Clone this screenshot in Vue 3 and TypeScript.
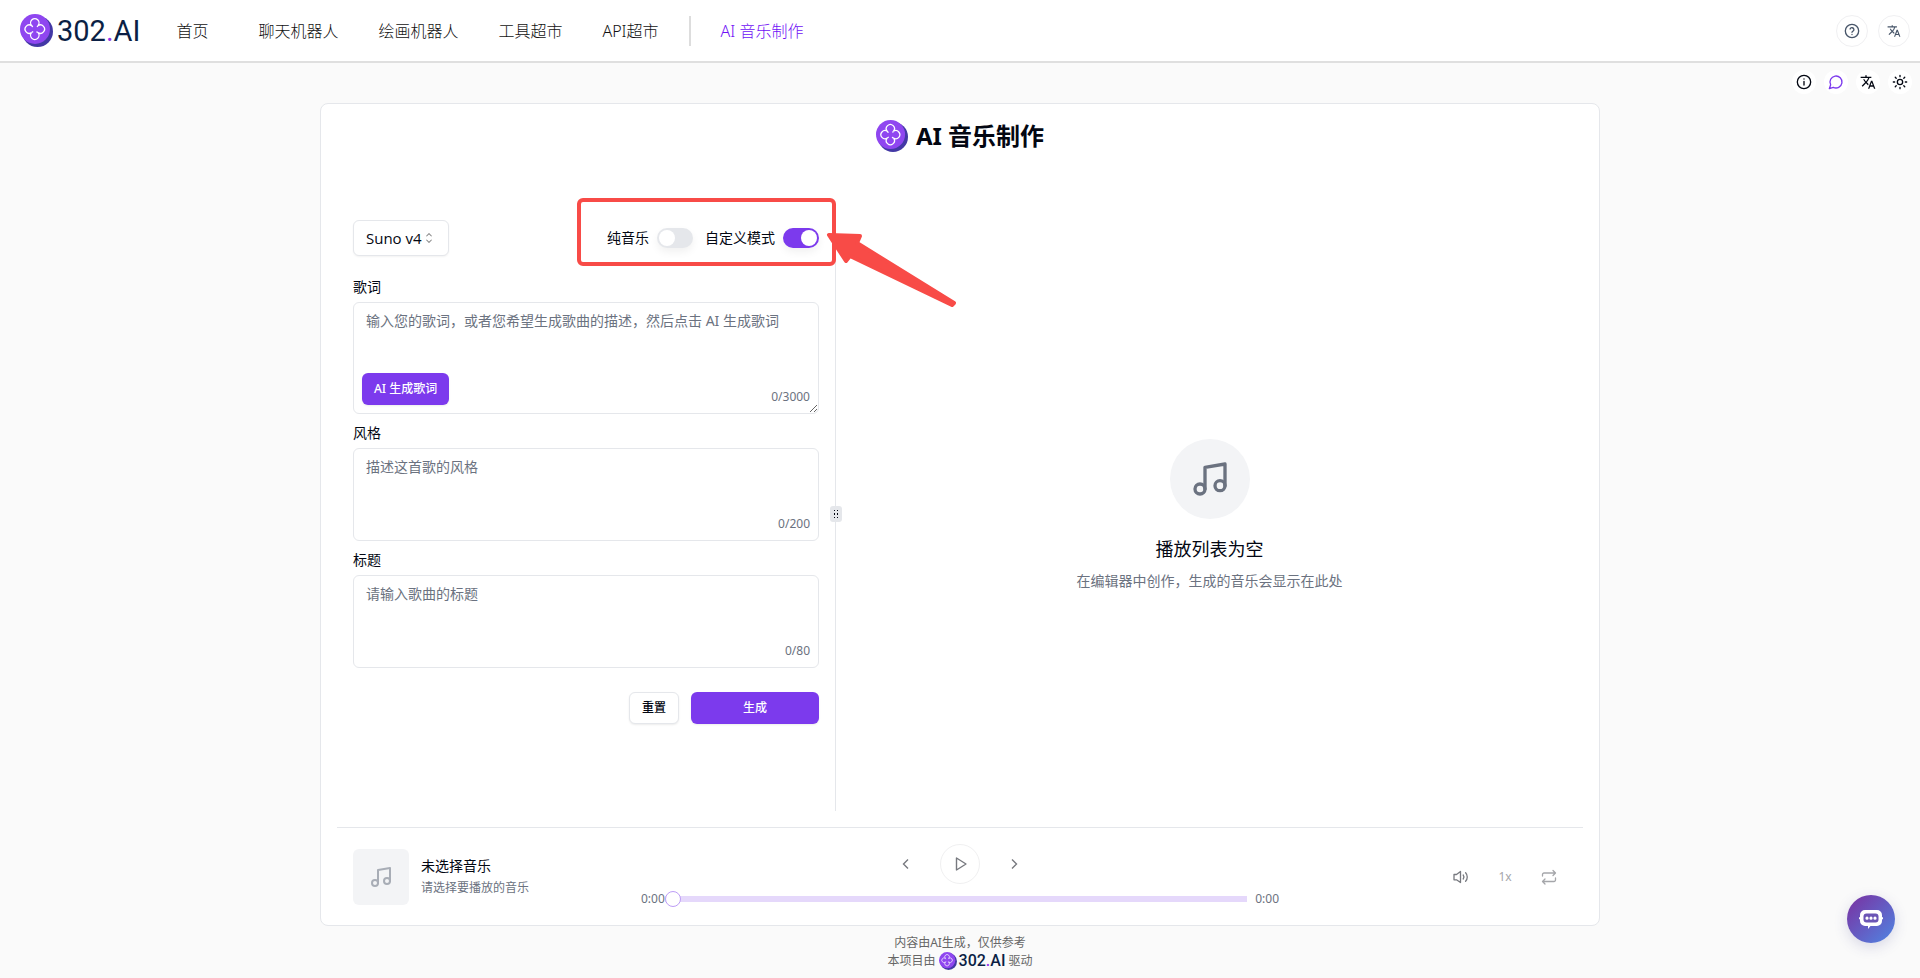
<script setup lang="ts">
import { ref } from 'vue'

interface NavItem {
  label: string
  href: string
}

const navItems: NavItem[] = [
  { label: '聊天机器人', href: '#chat' },
  { label: '绘画机器人', href: '#draw' },
  { label: '工具超市', href: '#tools' },
  { label: 'API超市', href: '#api' },
]

const model = ref('Suno v4')
const instrumental = ref(false)
const customMode = ref(true)
const lyrics = ref('')
const musicStyle = ref('')
const songTitle = ref('')
const progress = ref(0)

function reset(): void {
  lyrics.value = ''
  musicStyle.value = ''
  songTitle.value = ''
}
</script>

<template>
  <div class="page">
    <svg class="defs" aria-hidden="true">
      <symbol id="brand" viewBox="0 0 33 33">
        <circle cx="17.5" cy="17.5" r="15.5" fill="#4338a5" />
        <circle cx="15" cy="15" r="15" fill="#8f46f0" />
        <g fill="none" stroke="#fff" stroke-width="1.3">
          <path d="M11.6 11.6A4.2 4.2 0 1 1 18 11.6A4.2 4.2 0 1 1 18 18.6A4.2 4.2 0 1 1 11.6 18.6A4.2 4.2 0 1 1 11.6 11.6A3 3 0 0 1 12.6 13.2" />
          <path d="M18 11.6A3 3 0 0 0 17.2 13M18 18.6A3 3 0 0 0 16.4 17.8M11.6 18.6A3 3 0 0 1 13.2 17.6" />
        </g>
      </symbol>
      <symbol id="translate" viewBox="0 0 24 24">
        <path fill="currentColor" d="M12.87 15.07l-2.54-2.51.03-.03A17.52 17.52 0 0 0 14.07 6H17V4h-7V2H8v2H1v1.99h11.17C11.5 7.92 10.44 9.75 9 11.35 8.07 10.32 7.3 9.19 6.69 8h-2c.73 1.63 1.73 3.17 2.98 4.56l-5.09 5.02L4 19l5-5 3.11 3.11.76-2.04zM18.5 10h-2L12 22h2l1.12-3h4.75L21 22h2l-4.5-12zm-2.62 7l1.62-4.33L19.12 17h-3.24z" />
      </symbol>
      <symbol id="music" viewBox="0 0 24 24" fill="none" stroke="currentColor" stroke-width="2" stroke-linecap="round" stroke-linejoin="round">
        <path d="M9 18V5l12-2v13" />
        <circle cx="6" cy="18" r="3" />
        <circle cx="18" cy="16" r="3" />
      </symbol>
    </svg>

    <header class="topbar">
      <a class="brand" href="#home" aria-label="302.AI">
        <svg class="brand-icon"><use href="#brand" /></svg>
        <span class="brand-text">302<i>.</i>AI</span>
      </a>
      <nav class="nav">
        <a class="nav-home" href="#home">首页</a>
        <a v-for="item in navItems" :key="item.label" :href="item.href">{{ item.label }}</a>
        <a class="nav-current" href="#music">AI 音乐制作</a>
      </nav>
      <div class="top-actions">
        <button type="button" class="round-btn" aria-label="帮助">
          <svg class="icon-16" viewBox="0 0 24 24" fill="none" stroke="currentColor" stroke-width="2" stroke-linecap="round" stroke-linejoin="round">
            <circle cx="12" cy="12" r="10" />
            <path d="M9.1 9a3 3 0 0 1 5.8 1c0 2-2.9 2.6-2.9 4M12 17.2h.01" />
          </svg>
        </button>
        <button type="button" class="round-btn" aria-label="语言">
          <svg class="icon-14"><use href="#translate" /></svg>
        </button>
      </div>
    </header>

    <div class="toolbar">
      <button type="button" class="tool-btn" aria-label="关于">
        <svg class="icon-16" viewBox="0 0 24 24" fill="none" stroke="currentColor" stroke-width="2" stroke-linecap="round">
          <circle cx="12" cy="12" r="10" />
          <path d="M12 16.5V11M12 7.5h.01" />
        </svg>
      </button>
      <button type="button" class="tool-btn violet" aria-label="反馈">
        <svg class="icon-16" viewBox="0 0 24 24" fill="none" stroke="currentColor" stroke-width="2" stroke-linejoin="round">
          <path d="M7.9 20A9 9 0 1 0 4 16.1L2 22Z" />
        </svg>
      </button>
      <button type="button" class="tool-btn" aria-label="切换语言">
        <svg class="icon-16"><use href="#translate" /></svg>
      </button>
      <button type="button" class="tool-btn" aria-label="主题">
        <svg class="icon-16" viewBox="0 0 24 24" fill="none" stroke="currentColor" stroke-width="2" stroke-linecap="round">
          <circle cx="12" cy="12" r="4" />
          <path d="M12 2v2M12 20v2M4.9 4.9l1.4 1.4M17.7 17.7l1.4 1.4M2 12h2M20 12h2M6.3 17.7l-1.4 1.4M19.1 4.9l-1.4 1.4" />
        </svg>
      </button>
    </div>

    <main class="card">
      <h1 class="title">
        <svg class="title-icon"><use href="#brand" /></svg>
        AI 音乐制作
      </h1>

      <div class="panels">
        <form class="editor" @submit.prevent>
          <div class="options">
            <div class="model">
              <select v-model="model" aria-label="模型">
                <option>Suno v4</option>
                <option>Suno v3</option>
              </select>
              <svg class="model-caret" viewBox="0 0 16 16" fill="none" stroke="currentColor" stroke-width="1.2" stroke-linejoin="round">
                <path d="M5 6l3-3 3 3M5 10l3 3 3-3" />
              </svg>
            </div>
            <div class="switches">
              <label class="switch">纯音乐<input v-model="instrumental" type="checkbox" role="switch" /></label>
              <label class="switch">自定义模式<input v-model="customMode" type="checkbox" role="switch" /></label>
              <div class="callout" aria-hidden="true"></div>
              <svg class="arrow" viewBox="0 0 132 78" aria-hidden="true">
                <path d="M3 4L34 5L31 12L128 72L126 74L24 25L20 30Z" fill="#f84b47" stroke="#f84b47" stroke-width="4" stroke-linejoin="round" />
              </svg>
            </div>
          </div>

          <label class="field-label" for="lyrics">歌词</label>
          <div class="field">
            <textarea id="lyrics" v-model="lyrics" class="tall" maxlength="3000" placeholder="输入您的歌词，或者您希望生成歌曲的描述，然后点击 AI 生成歌词"></textarea>
            <button type="button" class="btn primary lyric-btn">AI 生成歌词</button>
            <span class="count">{{ lyrics.length }}/3000</span>
          </div>

          <label class="field-label" for="style">风格</label>
          <div class="field">
            <textarea id="style" v-model="musicStyle" maxlength="200" placeholder="描述这首歌的风格"></textarea>
            <span class="count">{{ musicStyle.length }}/200</span>
          </div>

          <label class="field-label" for="song-title">标题</label>
          <div class="field">
            <textarea id="song-title" v-model="songTitle" maxlength="80" placeholder="请输入歌曲的标题"></textarea>
            <span class="count">{{ songTitle.length }}/80</span>
          </div>

          <div class="form-actions">
            <button type="button" class="btn outline" @click="reset">重置</button>
            <button type="submit" class="btn primary wide">生成</button>
          </div>
        </form>

        <div class="splitter">
          <span class="grip">
            <svg viewBox="0 0 10 10" fill="currentColor">
              <path d="M3 1h1v1H3zM6 1h1v1H6zM3 4h1v2H3zM6 4h1v2H6zM3 8h1v1H3zM6 8h1v1H6z" />
            </svg>
          </span>
        </div>

        <section class="empty">
          <div class="empty-icon"><svg><use href="#music" /></svg></div>
          <h2>播放列表为空</h2>
          <p>在编辑器中创作，生成的音乐会显示在此处</p>
        </section>
      </div>

      <section class="player">
        <div class="track">
          <div class="cover"><svg><use href="#music" /></svg></div>
          <div>
            <div class="track-name">未选择音乐</div>
            <div class="track-hint">请选择要播放的音乐</div>
          </div>
        </div>
        <div class="transport">
          <div class="buttons">
            <button type="button" class="plain" aria-label="上一首">
              <svg class="icon-16" viewBox="0 0 16 16" fill="none" stroke="currentColor" stroke-width="1.4"><path d="M10 3.500L5.500 8l4.500 4.500" /></svg>
            </button>
            <button type="button" class="play" aria-label="播放">
              <svg class="icon-16" viewBox="0 0 16 16" fill="none" stroke="currentColor" stroke-width="1.4" stroke-linejoin="round"><path d="M4.500 2L14 8L4.500 14Z" /></svg>
            </button>
            <button type="button" class="plain" aria-label="下一首">
              <svg class="icon-16" viewBox="0 0 16 16" fill="none" stroke="currentColor" stroke-width="1.4"><path d="M6 3.500L10.500 8L6 12.500" /></svg>
            </button>
          </div>
          <div class="timeline">
            <span>0:00</span>
            <input v-model.number="progress" type="range" min="0" max="100" aria-label="播放进度" />
            <span class="total">0:00</span>
          </div>
        </div>
        <div class="extras">
          <button type="button" class="plain" aria-label="音量">
            <svg class="icon-16" viewBox="0 0 16 16" fill="none" stroke="currentColor" stroke-width="1.3" stroke-linejoin="round" stroke-linecap="round">
              <path d="M1 5.500h2.500L7.500 2.500v11L3.500 10.800H1zM12.600 3.800c2.200 2.300 2.200 6.100 0 8.400M10.200 6c.9 1.200.9 2.800 0 4" />
            </svg>
          </button>
          <button type="button" class="plain pale">1x</button>
          <button type="button" class="plain pale" aria-label="循环">
            <svg class="icon-16" viewBox="0 0 16 16" fill="none" stroke="currentColor" stroke-width="1.3" stroke-linejoin="round" stroke-linecap="round">
              <path d="M1.500 7V5.500A1.500 1.500 0 0 1 3 4h11M12 1.500L14.500 4L12 6.500M14.500 9v2a1.500 1.500 0 0 1-1.500 1.500H2M4 10l-2.500 2.500L4 15" />
            </svg>
          </button>
        </div>
      </section>
    </main>

    <footer class="footer">
      <div>内容由AI生成，仅供参考</div>
      <div class="powered">
        本项目由
        <a class="mini-brand" href="#home">
          <svg><use href="#brand" /></svg>
          <span>302<i>.</i>AI</span>
        </a>
        驱动
      </div>
    </footer>

    <button type="button" class="fab" aria-label="客服">
      <svg viewBox="0 0 24 24">
        <path d="M6 3h12a5 5 0 0 1 5 5v6a5 5 0 0 1-5 5h-6.500l-2.500 3v-3H6a5 5 0 0 1-5-5V8a5 5 0 0 1 5-5z" fill="#fff" />
        <rect x="4.500" y="6.500" width="15" height="9" rx="3" fill="#6b55b5" />
        <path d="M0 11.200h3M21 11.200h3" stroke="#fff" stroke-width="2" />
        <path d="M8 11.200h.01M12 11.200h.01M16 11.200h.01" stroke="#fff" stroke-width="3.200" stroke-linecap="round" />
      </svg>
    </button>
  </div>
</template>

<style>
body {
  background: #fafafa;
}
</style>

<style scoped>
* {
  box-sizing: border-box;
}
.page {
  min-height: 100vh;
  display: flex;
  flex-direction: column;
  background: #fafafa;
  color: #030712;
  font: 14px/20px 'Noto Sans', 'Noto Sans CJK SC', sans-serif;
}
.defs {
  display: none;
}
button,
select,
textarea {
  font: inherit;
  color: inherit;
}
button {
  display: inline-flex;
  align-items: center;
  justify-content: center;
  padding: 0;
  border: 0;
  background: none;
  cursor: pointer;
}
a {
  color: inherit;
  text-decoration: none;
}
.icon-16 {
  width: 16px;
  height: 16px;
}
.icon-14 {
  width: 14px;
  height: 14px;
}

.topbar {
  display: flex;
  align-items: center;
  height: 63px;
  padding: 0 10px 0 20px;
  background: #fff;
  border-bottom: 2px solid #dfdfdf;
}
.brand {
  display: flex;
  align-items: center;
  gap: 4px;
}
.brand-icon {
  width: 33px;
  height: 33px;
}
.brand-text {
  color: #0b1f45;
  font: 400 29px/32px Roboto, sans-serif;
}
.brand-text i,
.mini-brand i {
  color: #9333ea;
  font-style: normal;
}
.nav {
  display: flex;
  align-items: center;
  gap: 40px;
  margin-left: 36px;
  color: #111;
  font-size: 16px;
  font-weight: 300;
  line-height: 30px;
}
.nav-home {
  margin-right: 10px;
}
.nav-current {
  margin-left: -10px;
  padding-left: 30px;
  border-left: 2px solid #ddd;
  color: #7010f5;
}
.top-actions {
  display: flex;
  gap: 10px;
  margin-left: auto;
}
.round-btn {
  width: 32px;
  height: 32px;
  border: 1px solid #f0f0f2;
  border-radius: 50%;
  color: #475569;
}
.toolbar {
  display: flex;
  justify-content: flex-end;
  gap: 8px;
  padding: 7px 8px 9px;
}
.tool-btn {
  width: 24px;
  height: 24px;
  border-radius: 50%;
  background: #fff;
}
.violet {
  color: #7c3aed;
}

.card {
  flex: 1;
  display: flex;
  flex-direction: column;
  width: 100%;
  max-width: 1280px;
  margin: 0 auto;
  padding: 16px 16px 0;
  background: #fff;
  border: 1px solid #e5e7eb;
  border-radius: 8px;
}
.title {
  display: flex;
  align-items: center;
  justify-content: center;
  gap: 8px;
  margin: 0 0 64px;
  font-size: 24px;
  font-weight: 700;
  line-height: 32px;
}
.title-icon {
  width: 32px;
  height: 32px;
}
.panels {
  flex: 1;
  display: grid;
  grid-template-columns: 2fr 1px 3fr;
}
.editor {
  padding: 4px 16px 16px;
}
.options {
  display: flex;
  align-items: center;
  justify-content: space-between;
  margin-bottom: 21px;
}
.model {
  position: relative;
}
.model select {
  width: 96px;
  height: 36px;
  padding: 0 12px;
  border: 1px solid #e5e7eb;
  border-radius: 6px;
  background: #fff;
  box-shadow: 0 1px 2px rgb(0 0 0 / 5%);
  font-family: 'Open Sans', sans-serif;
  font-size: 15px;
  appearance: none;
}
.model-caret {
  position: absolute;
  top: 11px;
  right: 13px;
  width: 14px;
  height: 14px;
  color: #888;
  pointer-events: none;
}
.switches {
  position: relative;
  display: flex;
  gap: 12px;
}
.switch {
  display: flex;
  align-items: center;
  gap: 8px;
}
.switch input {
  width: 36px;
  height: 20px;
  margin: 0;
  padding: 2px;
  border-radius: 10px;
  background: #e5e7eb;
  box-shadow: 0 4px 8px rgb(0 0 0 / 6%);
  appearance: none;
}
.switch input::before {
  content: '';
  display: block;
  width: 16px;
  height: 16px;
  border-radius: 50%;
  background: #fff;
}
.switch input:checked {
  padding-left: 18px;
  background: #7c3aed;
}
.callout {
  position: absolute;
  top: -30px;
  right: -17px;
  bottom: -18px;
  left: -30px;
  border: 4px solid #f84b47;
  border-radius: 6px;
  pointer-events: none;
}
.arrow {
  position: absolute;
  top: 3px;
  left: 100%;
  width: 132px;
  height: 78px;
  margin-left: 7px;
  pointer-events: none;
  z-index: 1;
}
.field-label {
  display: block;
  margin-bottom: 5px;
}
.field {
  position: relative;
  margin-bottom: 9px;
}
.field textarea {
  display: block;
  width: 100%;
  height: 93px;
  padding: 8px 12px;
  border: 1px solid #e5e7eb;
  border-radius: 6px;
  background: #fff;
  resize: none;
}
.field textarea.tall {
  height: 112px;
  resize: vertical;
}
.field textarea::placeholder {
  color: #6b7280;
}
.count {
  position: absolute;
  right: 9px;
  bottom: 8px;
  color: #6b7280;
  font-size: 12px;
  line-height: 18px;
}
.btn {
  height: 32px;
  padding: 0 12px;
  border-radius: 6px;
  box-shadow: 0 1px 2px rgb(0 0 0 / 8%);
  font-size: 12px;
  font-weight: 500;
}
.primary {
  background: #7c3aed;
  color: #fff;
}
.outline {
  border: 1px solid #e5e7eb;
  background: #fff;
}
.wide {
  width: 128px;
}
.lyric-btn {
  position: absolute;
  bottom: 9px;
  left: 9px;
}
.form-actions {
  display: flex;
  justify-content: flex-end;
  gap: 12px;
  margin-top: 24px;
}
.splitter {
  display: flex;
  align-items: center;
  justify-content: center;
  background: #e5e7eb;
}
.grip {
  display: flex;
  flex: none;
  align-items: center;
  justify-content: center;
  width: 12px;
  height: 16px;
  border-radius: 3px;
  background: #e5e7eb;
}
.grip svg {
  width: 10px;
  height: 10px;
}
.empty {
  display: flex;
  flex-direction: column;
  align-items: center;
  justify-content: center;
  padding-top: 3px;
}
.empty-icon {
  display: grid;
  place-items: center;
  width: 80px;
  height: 80px;
  border-radius: 50%;
  background: #f3f4f6;
  color: #6b7280;
}
.empty-icon svg {
  width: 40px;
  height: 40px;
}
.empty h2 {
  margin: 16px 0 8px;
  font-size: 18px;
  font-weight: 400;
  line-height: 28px;
}
.empty p {
  margin: 0;
  color: #6b7280;
}

.player {
  display: grid;
  grid-template-columns: 1fr 638px 1fr;
  align-items: center;
  margin-top: 16px;
  padding: 16px;
  border-top: 1px solid #e5e7eb;
}
.track {
  display: flex;
  align-items: center;
  gap: 12px;
}
.cover {
  display: grid;
  place-items: center;
  width: 56px;
  height: 56px;
  border-radius: 6px;
  background: #f3f4f6;
  color: #a8adb6;
}
.cover svg {
  width: 24px;
  height: 24px;
}
.track-hint {
  margin-top: 2px;
  color: #6b7280;
  font-size: 12px;
}
.buttons {
  display: flex;
  align-items: center;
  justify-content: center;
  gap: 18px;
}
.plain {
  width: 32px;
  height: 32px;
  color: #77797f;
  font-size: 12px;
}
.pale {
  color: #a5a6aa;
}
.play {
  width: 40px;
  height: 40px;
  border: 1px solid #f0f0f1;
  border-radius: 50%;
  color: #77797f;
}
.timeline {
  display: flex;
  align-items: center;
  margin-top: 5px;
  color: #6b7280;
  font-size: 12px;
}
.timeline input {
  flex: 1;
  min-width: 0;
  height: 16px;
  margin: 0;
  background: linear-gradient(#e5d8fb, #e5d8fb) center / 100% 6px no-repeat;
  border-radius: 3px;
  appearance: none;
}
.timeline input::-webkit-slider-thumb {
  width: 16px;
  height: 16px;
  border: 1px solid #bd9df6;
  border-radius: 50%;
  background: #fff;
  appearance: none;
}
.total {
  margin-left: 8px;
}
.extras {
  display: flex;
  justify-content: flex-end;
  gap: 12px;
  padding-right: 2px;
}

.footer {
  padding: 8px 0;
  color: #666;
  font-size: 12px;
  line-height: 18px;
  text-align: center;
}
.powered {
  display: flex;
  align-items: center;
  justify-content: center;
  gap: 3px;
}
.mini-brand {
  display: flex;
  align-items: center;
  gap: 2px;
  color: #0b1f45;
  font: 500 16px/18px Roboto, sans-serif;
}
.mini-brand svg {
  width: 18px;
  height: 18px;
}
.fab {
  position: fixed;
  right: 25px;
  bottom: 35px;
  width: 48px;
  height: 48px;
  border-radius: 50%;
  background: linear-gradient(135deg, #7b2fa0, #4f86e3);
  box-shadow: 0 4px 14px rgb(60 60 140 / 18%);
}
.fab svg {
  width: 24px;
  height: 24px;
}
</style>
